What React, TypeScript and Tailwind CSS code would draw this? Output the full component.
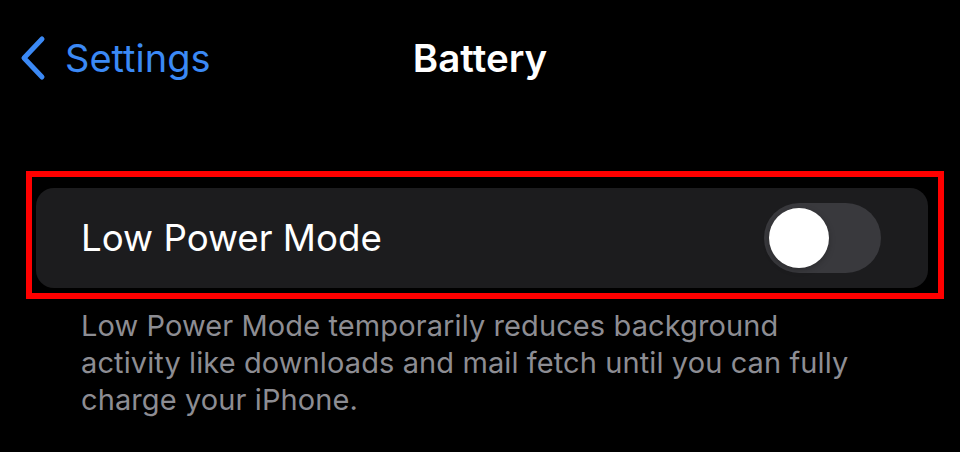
export default function App() {
  return (
    <div
      className="w-[960px] h-[452px] bg-black overflow-hidden text-white"
      style={{ fontFamily: 'Inter, "Noto Sans", sans-serif' }}
    >
      {/* nav bar */}
      <div className="grid grid-cols-[1fr_auto_1fr] items-center h-[115px]">
        <div className="flex items-center pl-[19px] text-[#3b89f5]">
          <svg width="28" height="48" viewBox="0 0 28 48" fill="none">
            <polyline
              points="23,5 5,24 23,43"
              stroke="currentColor"
              strokeWidth="5"
              strokeLinecap="round"
              strokeLinejoin="round"
            />
          </svg>
          <span className="ml-[18px] text-[38px] leading-[48px]">Settings</span>
        </div>
        <div className="text-[38.5px] leading-[48px] font-semibold">Battery</div>
        <div />
      </div>

      {/* highlighted row */}
      <div className="mt-[56px] ml-[26px] w-[918px] border-[6px] border-[#ff0000] pt-[11px] pb-[5px] pl-[4px] pr-[10px]">
        <div className="flex items-center justify-between h-[100px] rounded-[18px] bg-[#1c1c1e] pl-[45px] pr-[47px]">
          <span className="text-[36.7px] leading-[44px] text-white">Low Power Mode</span>
          <div className="w-[117px] h-[70px] rounded-full bg-[#39393d] p-[5px] flex items-center">
            <div className="w-[60px] h-[60px] rounded-full bg-white shadow-[0_2px_6px_rgba(0,0,0,0.25)]" />
          </div>
        </div>
      </div>

      <p className="mt-[8px] pl-[81px] pr-[40px] text-[29px] leading-[37px] tracking-[0.1px] text-[#8d8d93]">
        Low Power Mode temporarily reduces background
        <br />
        activity like downloads and mail fetch until you can fully
        <br />
        charge your iPhone.
      </p>
    </div>
  )
}
